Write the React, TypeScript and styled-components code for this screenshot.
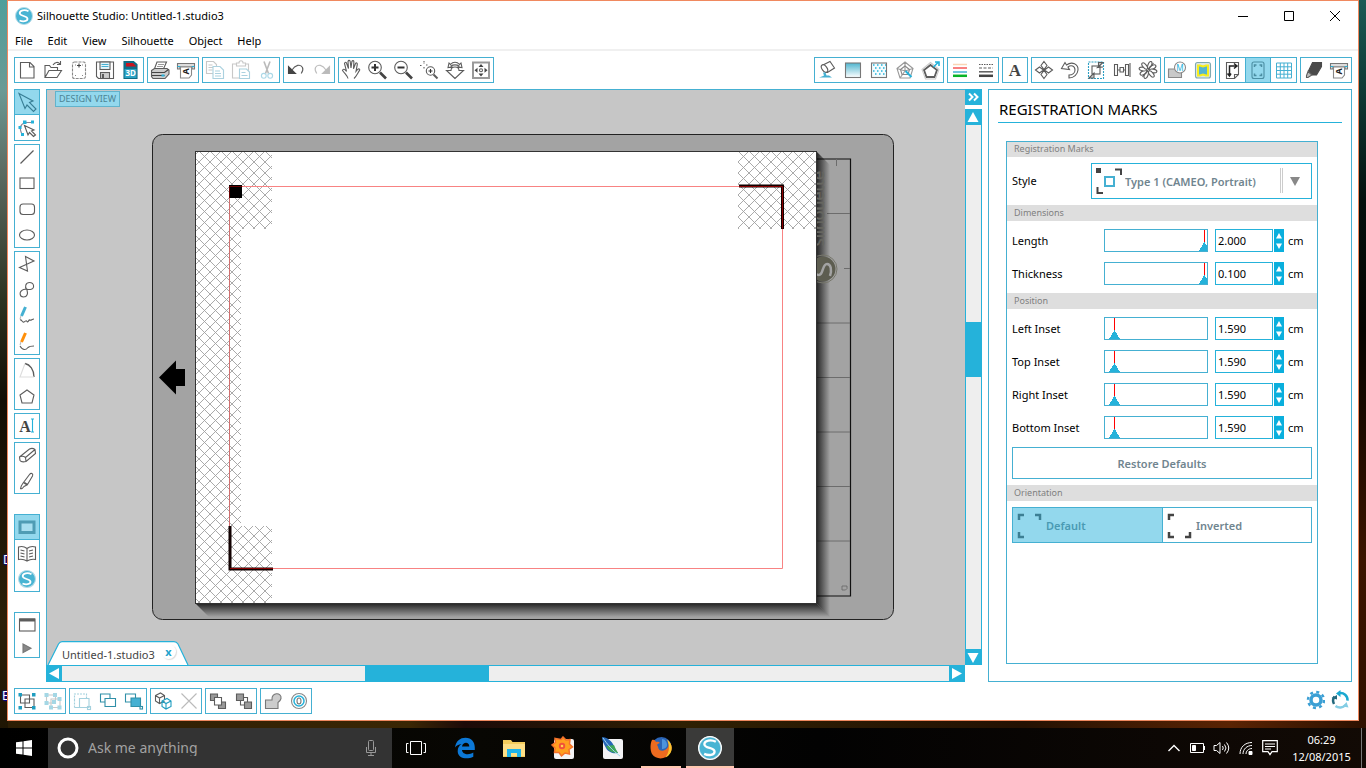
import React from "react";
import styled, { createGlobalStyle, css } from "styled-components";

const blue = "#45b0d2";
const bright = "#25b2da";
const pale = "#93d8ed";
const ink = "#5c5c5c";
const uiFont = '"Noto Sans", "Open Sans", sans-serif';

const GlobalStyle = createGlobalStyle`
  * { box-sizing: border-box; }
  html, body { margin: 0; padding: 0; }
  body { font-family: ${uiFont}; font-size: 11px; line-height: 16px; color: #000; background: #0a0603; }
  button, input, select { font: inherit; color: inherit; margin: 0; }
  button { border: 0; padding: 0; background: none; display: block; }
  svg { display: block; }
`;

/* ---------- desktop and window ---------- */

const Desktop = styled.div`
  min-height: 100vh;
  display: flex;
  flex-direction: column;
  background:
    linear-gradient(#4f9f9b 0, #6b9a95 90px, #5c6c62 170px, #2c3320 300px, #120d04 400px, #2c1f08 620px, #1b1202 100%) left / 8px 100% no-repeat,
    linear-gradient(#1d5a55 0, #0d3a35 90px, #03100d 200px, #050300 330px, #3b1400 560px, #2b1000 100%) right / 8px 100% no-repeat,
    linear-gradient(90deg, #2c1d04, #3a2604 30%, #1d0a08 34%, #2f2003 50%, #241102 75%, #5a2303 90%, #2b1000);
`;

const WindowArea = styled.div`
  position: relative;
  flex: 1;
  display: flex;
  padding: 0 7px 7px;
  overflow: hidden;
`;

const DesktopLabel = styled.span<{ $left: number; $top: number }>`
  position: absolute;
  left: ${(p) => p.$left}px;
  top: ${(p) => p.$top}px;
  color: #fff;
  font-size: 12px;
  text-shadow: 0 0 2px #00f, 1px 1px 1px #008;
`;

const Window = styled.main`
  position: relative;
  flex: 1;
  display: flex;
  flex-direction: column;
  min-width: 0;
  border: 1px solid #f0895f;
  background: #fff;
`;

const TitleBar = styled.header`
  display: flex;
  align-items: center;
  height: 29px;
  padding-left: 7px;
`;

const Title = styled.h1`
  flex: 1;
  margin: 0 0 0 4px;
  font-size: 11px;
  line-height: 16px;
  font-weight: 400;
`;

const CaptionButton = styled.button`
  width: 46px;
  height: 29px;
  display: grid;
  place-items: center;
`;

const MenuBar = styled.nav`
  display: flex;
  gap: 15px;
  height: 21px;
  padding: 2px 7px 0;
  border-bottom: 2px solid #f0f0f0;
`;

const MenuItem = styled.button`
  font-size: 11px;
  line-height: 16px;
`;

const Bar = styled.div`
  display: flex;
  justify-content: space-between;
  padding: 6px;
`;

const BarSide = styled.div`
  display: flex;
  gap: 3px;
`;

const Group = styled.div<{ $vertical?: boolean; $spaced?: boolean }>`
  display: flex;
  flex-direction: ${(p) => (p.$vertical ? "column" : "row")};
  margin-top: ${(p) => (p.$spaced ? 17 : 0)}px;
  outline: 1px solid ${blue};
  outline-offset: -1px;
`;

const Tool = styled.button<{ $active?: boolean; $faded?: boolean; $short?: boolean }>`
  width: 26px;
  height: ${(p) => (p.$short ? 20 : 26)}px;
  overflow: hidden;
  ${(p) => p.$active && css`background: ${pale}; box-shadow: inset 0 0 0 1px ${blue};`}
  svg { opacity: ${(p) => (p.$faded ? 0.4 : 1)}; margin-top: ${(p) => (p.$short ? -3 : 0)}px; }
`;

const Workspace = styled.div`
  flex: 1;
  display: flex;
  gap: 6px;
  padding: 0 6px;
`;

const ToolColumn = styled.div`
  display: flex;
  flex-direction: column;
  gap: 3px;
`;

/* ---------- design view ---------- */

const DesignPane = styled.section`
  flex: 1;
  min-width: 0;
  display: grid;
  grid-template-columns: minmax(0, 1fr) 17px;
  grid-template-rows: 1fr 17px;
`;

const Canvas = styled.div`
  display: flex;
  flex-direction: column;
  align-items: flex-start;
  border: solid ${blue};
  border-width: 1px 0 0 1px;
  background: #c6c6c6;
`;

const ViewBadge = styled.div`
  margin: 1px 0 0 8px;
  padding: 0 3px;
  border: 1px solid #62b3cb;
  background: ${pale};
  color: #4d8494;
  font-size: 9px;
  line-height: 14px;
`;

const ArtArea = styled.div`
  flex: 1;
  align-self: stretch;
  display: flex;
  justify-content: center;
  padding: 27px 0 0 34px;
  overflow: hidden;
`;

const DocTab = styled.div`
  position: relative;
  display: flex;
  align-items: center;
  height: 24px;
  width: 142px;
  padding: 3px 0 0 15px;
  color: #444;
  font-size: 11px;
`;

const TabShape = styled.svg`
  position: absolute;
  left: 0;
  top: 0;
`;

const TabText = styled.span`
  position: relative;
  flex: 1;
  white-space: nowrap;
`;

const TabClose = styled.button`
  position: relative;
  width: 15px;
  height: 15px;
  margin: -7px 13px 0 0;
  border-radius: 50%;
  box-shadow: 1px 1px 1px #ddd;
  color: #1fa3cc;
  font-size: 11px;
  font-weight: 700;
  line-height: 13px;
`;

const VScroll = styled.div`
  display: flex;
  flex-direction: column;
  background: #fff;
`;

const HScroll = styled.div`
  display: flex;
  border: solid ${bright};
  border-width: 1px 0;
  background: #eee;
`;

const ScrollButton = styled.button`
  width: 17px;
  height: 16px;
  flex: none;
  background: ${bright};
`;

const HScrollButton = styled(ScrollButton)`
  width: 16px;
  height: 15px;
`;

const VTrack = styled.div`
  flex: 1;
  display: grid;
  grid-template-rows: 197fr 55fr 272fr;
  border: solid ${bright};
  border-width: 0 1px;
  background: #eee;
`;

const HTrack = styled.div`
  flex: 1;
  display: grid;
  grid-template-columns: 303fr 124fr 461fr;
`;

const VThumb = styled.div`
  grid-row: 2;
  background: ${bright};
`;

const HThumb = styled.div`
  grid-column: 2;
  background: ${bright};
`;

const Spacer = styled.div`
  height: 4px;
`;

/* ---------- registration marks panel ---------- */

const Panel = styled.aside`
  width: 364px;
  display: flex;
  flex-direction: column;
  border: 1px solid ${blue};
`;

const PanelTitle = styled.h2`
  margin: 0 9px;
  height: 33px;
  padding: 8px 0 0 1px;
  border-bottom: 1px solid ${bright};
  font-size: 15px;
  line-height: 22px;
  font-weight: 400;
`;

const Frame = styled.div`
  flex: 1;
  margin: 18px 33px 17px 17px;
  outline: 1px solid ${blue};
  outline-offset: -1px;
`;

const SectionTitle = styled.h3`
  margin: 0;
  padding-left: 8px;
  background: #dedede;
  color: #808080;
  font-size: 9px;
  line-height: 16px;
  font-weight: 400;
`;

const SectionBody = styled.div<{ $tight?: boolean }>`
  display: flex;
  flex-direction: column;
  gap: ${(p) => (p.$tight ? 6 : 10)}px;
  padding: ${(p) => (p.$tight ? 6 : 8)}px 6px;
`;

const Field = styled.div`
  display: flex;
  align-items: center;
`;

const Label = styled.label<{ $narrow?: boolean }>`
  width: ${(p) => (p.$narrow ? 79 : 92)}px;
`;

const SliderFrame = styled.div`
  flex: 1;
  height: 23px;
  border: 1px solid ${blue};
  overflow: hidden;
`;

const Slider = styled.input`
  display: block;
  appearance: none;
  width: calc(100% + 3px);
  height: 21px;
  background: none;
  &::-webkit-slider-thumb {
    appearance: none;
    width: 11px;
    height: 21px;
    border: 0;
    border-radius: 0;
    background:
      linear-gradient(to bottom right, transparent 50%, ${bright} 50%) 0 100% / 6px 10px no-repeat,
      linear-gradient(to bottom left, transparent 50%, ${bright} 50%) 100% 100% / 6px 10px no-repeat,
      linear-gradient(#f00, #f00) 5px 0 / 1px 12px no-repeat;
  }
`;

const NumberBox = styled.input`
  width: 58px;
  height: 23px;
  margin: 0 1px 0 7px;
  padding: 0 0 0 2px;
  border: 1px solid ${bright};
  border-radius: 0;
  background: #fff;
  font-size: 11px;
`;

const Stepper = styled.div`
  display: flex;
  flex-direction: column;
  background: #0aafdd;
`;

const Step = styled.button`
  width: 10px;
  height: 11px;
  &:first-child { height: 12px; }
`;

const Unit = styled.span`
  width: 28px;
  padding-left: 4px;
`;

const SelectFrame = styled.div`
  position: relative;
  flex: 1;
  height: 36px;
  border: 1px solid ${bright};
`;

const Select = styled.select`
  appearance: none;
  width: 100%;
  height: 34px;
  padding: 2px 0 0 33px;
  border: 0;
  background: none;
  color: #70858f;
  font-size: 11px;
  font-weight: 600;
`;

const SelectMark = styled.svg<{ $right?: boolean }>`
  position: absolute;
  top: 0;
  ${(p) => (p.$right ? "right: 0;" : "left: 0;")}
  pointer-events: none;
`;

const RestoreButton = styled.button`
  height: 32px;
  margin-top: -2px;
  margin-bottom: -2px;
  padding-top: 2px;
  border: 1px solid ${blue};
  color: #70858f;
  font-size: 11px;
  font-weight: 600;
`;

const Orientation = styled.div`
  display: grid;
  grid-template-columns: 1fr 1fr;
  outline: 1px solid ${blue};
  outline-offset: -1px;
`;

const OrientationButton = styled.button<{ $active?: boolean }>`
  display: flex;
  align-items: center;
  height: 36px;
  padding-top: 1px;
  background: ${(p) => (p.$active ? pale : "#fff")};
  color: ${(p) => (p.$active ? "#4a9ab3" : "#70858f")};
  font-size: 11px;
  font-weight: 600;
  & + & { box-shadow: inset 1px 0 0 ${blue}; }
`;

/* ---------- taskbar ---------- */

const Taskbar = styled.footer`
  display: flex;
  height: 40px;
  background: linear-gradient(90deg, #000, #080703 35%, #020202 60%, #120a05);
  color: #fff;
`;

const StartButton = styled.button`
  width: 48px;
  display: grid;
  place-items: center;
`;

const SearchBox = styled.label`
  display: flex;
  align-items: center;
  width: 344px;
  padding: 0 13px 0 8px;
  gap: 8px;
  background: #333;
`;

const SearchInput = styled.input`
  flex: 1;
  min-width: 0;
  padding: 0;
  border: 0;
  background: none;
  font-size: 14px;
  &::placeholder { color: #a2a2a2; opacity: 1; }
`;

const Apps = styled.div`
  flex: 1;
  display: flex;
  gap: 1px;
`;

const AppButton = styled.button<{ $state?: "open" | "active" }>`
  position: relative;
  width: 48px;
  display: grid;
  place-items: center;
  background: ${(p) => (p.$state === "active" ? "#3a3a39" : "none")};
  &::after {
    content: "";
    display: ${(p) => (p.$state ? "block" : "none")};
    position: absolute;
    bottom: 0;
    left: ${(p) => (p.$state === "open" ? 4 : 0)}px;
    right: ${(p) => (p.$state === "open" ? 4 : 0)}px;
    height: 2px;
    background: #ffc7b0;
  }
`;

const Tray = styled.div`
  display: flex;
  align-items: center;
`;

const TrayButton = styled.button`
  width: 24px;
  display: grid;
  place-items: center;
`;

const Clock = styled.time`
  width: 79px;
  text-align: center;
  font-size: 11px;
  line-height: 17px;
`;

const ShowDesktop = styled.button`
  align-self: stretch;
  width: 5px;
  border-left: 1px solid #777;
`;

/* ---------- icons on a 26 unit grid ---------- */

const MatSend = (
  <>
    <path d="M4.500 6.500h17v5.500h-2.500v-2h-12v2h-2.500z" fill="#ddd" stroke="#777" />
    <path d="M4.500 9.500h3m11 0h3" stroke={bright} />
    <path d="M7.500 10v11h8.500l2.500-3V10z" fill="#fff" stroke="#888" />
    <text transform="translate(15.5 14.5) rotate(-90)" fontSize="9" fontWeight="700" textAnchor="middle" fill="#222" stroke="none">A</text>
  </>
);
const Brush = (color: string, tail: string) => (
  <>
    <path d="M11.500 4L7.500 13" stroke={color} strokeWidth="3" />
    <path d="M7 13l-1 3" stroke="#bbb" />
    <path d={tail} />
  </>
);
const Loupe = (
  <>
    <circle cx="11" cy="10.500" r="6.300" fill="#fff" />
    <path d="M16 15.500l6 6" strokeWidth="2.600" stroke="#444" />
  </>
);
const Cube = (x: number, y: number, c: string) => (
  <path d={`M${x} ${y}l5-2.500 4 2.500v5.500l-5 2.500-4-2.500z M${x} ${y}l4 2.500 5-2.500 M${x + 4} ${y + 2.5}v5.500`} stroke={c} fill="#fff" />
);
const Logo = (
  <>
    <circle cx="13" cy="13" r="8.500" fill="#48b4d3" stroke="#b7dce8" />
    <path d="M17.500 8.200C14 6.200 8.500 7 8.700 10.300c.2 3.200 7.800 2.200 7.800 5.500 0 2.600-4.500 3.300-8 1.700" stroke="#fff" strokeWidth="1.800" />
  </>
);

const icons: Record<string, React.ReactNode> = {
  new: <path d="M6.500 5.500h9.500l4 4v11.500h-13.500z M15.500 5.500v4.500h4.500" fill="#fff" />,
  open: <path d="M5 20V8.500h4.500l1.500 2h6.500v3 M5 20.500l4-7h12.500l-4.500 7z M13 8c2-3 5-3.500 7-1 M20.500 4v3.500h-3.500" />,
  mat: <><rect x="6.500" y="5" width="13" height="16.500" rx="2" strokeDasharray="3 1" stroke="#888" /><path d="M13 6.500v4 M11 8.500h4" stroke="#444" /><path d="M9 18.500h1m6 0h1 M9 8h1m6 0h1" stroke="#888" /></>,
  save: <><path d="M4.500 5h17v16.500h-15l-2-2z" /><rect x="8" y="5" width="10" height="7.500" fill="#e6f5fa" /><path d="M9.500 7.500h7m-7 2h7" stroke={blue} /><rect x="8.500" y="15.500" width="9" height="6" fill="#ccc" /><path d="M11 17v4" strokeWidth="2" /></>,
  sd: <><path d="M6 4.500h9.500l3.500 3v14h-13z" fill="#0f6f8a" stroke="#0e6a82" /><path d="M6.500 12h12v9h-12z" fill="#2ba3c4" stroke="none" /><path d="M8 6h7l3.500 3.500h-10.500z" fill="#c8141f" stroke="none" /><text x="7.500" y="19" fontSize="8" fontWeight="700" fill="#fff" stroke="none">3D</text></>,
  print: <><path d="M10 5h9.500l-3.500 8h-9z" fill="#fff" /><path d="M4.500 13.500l3-2h12.500l2 1.500v4l-4 4.500h-12l-1.500-2z" fill="#ccc" /><path d="M5 15.500h12.500l4-3 M5 18.500h12.500" stroke="#444" /><path d="M11 7.500h6m-7 2h6" stroke="#999" /><path d="M14.500 18.500h3" stroke={bright} strokeWidth="2" /></>,
  send: MatSend,
  copy: <><path d="M4.500 4.500h7l3 3v9h-10z" fill="#fff" stroke="#777" /><path d="M6.500 8h4m-4 2.500h5m-5 2.500h4" stroke="#777" /><path d="M11 9.500h7l3.500 3.500v8.500h-10.500z" fill="#fff" stroke="#2f8fb0" /><path d="M13 14h5m-5 2.500h6m-6 2.500h6" stroke="#2f8fb0" /></>,
  paste: <><path d="M4.500 7h16v14h-16z" stroke="#777" /><path d="M8.500 9v-3h2.500c0-3 4-3 4 0h2.500v3z" fill="#fff" stroke="#777" /><path d="M11.500 12h7l3 3v6.500h-10z" fill="#fff" stroke="#2f8fb0" /><path d="M13.500 15.500h4m-4 3h6" stroke="#2f8fb0" /></>,
  cut: <><path d="M10 4.500l4.500 12 M16 4.500l-4.500 12" stroke="#555" strokeWidth="1.600" /><circle cx="9.800" cy="18.800" r="2.400" stroke="#2f9fc5" /><circle cx="16.200" cy="18.800" r="2.400" stroke="#2f9fc5" /></>,
  undo: <><path d="M5.500 9.500v7h7z" fill="#444" stroke="#444" /><path d="M9 13c3-5 8.500-6.500 10.500-2.500.9 2 .2 4-1.300 6" /></>,
  redo: <><path d="M20.500 9.500v7h-7z" fill="#555" /><path d="M17 13c-3-5-8.500-6.500-10.500-2.500-.9 2-.2 4 1.300 6" /></>,
  hand: <path d="M10 21.500c-.5-2.500-2-3.500-5.500-8 .5-2 2-1.500 4 .8L6.500 6.500c.5-1.800 1.800-1.500 2.200 0l1.800 5-.5-7c.5-1.600 2-1.300 2.200 0l.8 6.500.9-6.500c.6-1.400 1.900-1.100 2 .3l-.4 6.900 2-5.200c.8-1.200 2-.6 1.800.8l-1.300 7 1.600-1.900c1.300-1 2.500-.3 2 1-1.600 2-3 5.800-5.600 8.100" fill="#fff" />,
  zoomIn: <>{Loupe}<path d="M7.500 10.500h7 M11 7v7" stroke="#333" strokeWidth="2" /></>,
  zoomOut: <>{Loupe}<path d="M7.500 10.500h7" stroke="#333" strokeWidth="2" /></>,
  zoomSel: <><circle cx="14.500" cy="14" r="4.200" /><path d="M12.500 14h4m-2-2v4" stroke="#333" /><path d="M17.500 17.500l4 4" strokeWidth="2" /><path d="M8 4v3m0 3v2.500 M4 8.500h2.500m3.500-.500h2" strokeDasharray="1.500 1" /></>,
  zoomDrag: <path d="M13 21.500l-8.500-8h4.500c0-2 1-3.500 4-3.500s4 1.500 4 3.500h4.500z M6 10.500l1-4.500 1.500 1.500c2.500-3 6.500-3 9 0l1.500-1.500 1 4.500-4.500-.5 1.500-1c-2-1.500-6-1.500-8 0l1.500 1z" fill="#fff" />,
  fit: <><rect x="5" y="5.500" width="16" height="15.500" fill="#fff" stroke="#999" strokeWidth="2" /><path d="M13 7l2.500 3h-5z M13 19.500l2.500-3h-5z M6.500 13.200l3-2.500v5z M19.500 13.200l-3-2.500v5z" fill="#444" stroke="none" /><circle cx="13" cy="13.200" r="1.500" fill="#fff" /></>,
  fillColor: <><path d="M8 8.500l8-4 4.500 6.500-7 4.500c-3 0-6-3.500-5.500-7z" fill="#fff" /><ellipse cx="10.500" cy="11.500" rx="2.500" ry="4.200" transform="rotate(-35 10.500 11.500)" fill="#fff" /><path d="M5 20.500h13l-3-2h-2.500l-1-3h-2.500l1 3c-1 1-3 1-5 2z" fill={blue} stroke="none" /></>,
  gradient: <><defs><linearGradient id="fillFade" x2="0" y2="1"><stop stopColor="#4fb5cf" /><stop offset="1" stopColor="#fff" /></linearGradient></defs><rect x="5.500" y="6" width="15" height="14.500" fill="url(#fillFade)" stroke="#777" /></>,
  dots: <><rect x="5.500" y="6" width="15" height="14.500" fill="#f4fcfe" stroke="#777" /><path d="M7 8h13 M9 11h11 M7 14h13 M9 17h11" stroke={bright} strokeWidth="1.500" strokeDasharray="1.500 2.500" /></>,
  penta: <><path d="M13 5l8 6.500-3 9.500h-10l-3-9.500z M13 5v9 M5 11.500l8 2.500 8-2.500 M8 21l5-7" stroke="#999" /><path d="M8.500 12.500l4.500-3.500 4.500 3.500-1.500 5h-6z" stroke="#888" /><path d="M13.500 14l6 6" stroke={bright} strokeWidth="2" /></>,
  pentaLine: <><path d="M12.500 8l6.500 5-2.500 7h-8l-2.500-7z" strokeWidth="1.800" /><path d="M12.500 5.500l8.500 7-3.500 9.500h-10l-3.500-9.500z" stroke="#ccc" /><path d="M15.500 10l4.500-4.500m-3-.500h4v4" stroke={bright} strokeWidth="1.600" /></>,
  lineColor: <><path d="M6 7.500h14" stroke="#fad4b4" strokeWidth="1.500" /><path d="M6 11h14" stroke="#f88080" strokeWidth="2" /><path d="M6 15h14" stroke="#45b0d2" strokeWidth="1.500" /><path d="M6 18.800h14" stroke="#08b427" strokeWidth="2.500" /></>,
  lineStyle: <><path d="M6 7.500h14" strokeDasharray="1.500 1" /><path d="M6 11h14" strokeDasharray="3 1.500" /><path d="M6 14.800h14" strokeWidth="1.500" /><path d="M6 18.800h14" strokeWidth="2.500" stroke="#444" /></>,
  letter: <text x="13" y="19" fontSize="17" fontWeight="700" textAnchor="middle" fontFamily="Liberation Serif, serif" fill="#444" stroke="none">A</text>,
  move: <><path d="M13 4.500l3 4-3 4-3-4z M13 21.500l3-4-3-4-3 4z M4.500 13l4-3 4 3-4 3z M21.500 13l-4-3-4 3 4 3z" fill="#fff" /></>,
  rotate: <path d="M4.500 11.500l3.500-6 1.500 2.500c5.500-4 12-1 11.500 5-.5 4.500-4 8-9 8v-3c3.500 0 6-2 6-5 0-4-4-5.500-7-3l1.500 2.500z" fill="#fff" />,
  scale: <><rect x="5.500" y="5" width="15" height="16.500" stroke="#2d9fc4" strokeDasharray="2 1" /><rect x="9" y="9" width="8" height="8" fill="#fff" /><path d="M14.500 10.500l5.500-5h-4.500v4.500h4.500z M6 21l5-5v5z" fill="#ccc" /></>,
  align: <path d="M5.500 7.500h3v11h-3z M16.500 7.500h3v11h-3z M11 10.500h3.500v4.500h-3.500z M8.500 13h2.500m3.500 0h2 M21 6v14" />,
  replicate: <g>{[20, 60, 100, 140, 200, 240, 280, 320].map((a) => <ellipse key={a} cx="13" cy="7.800" rx="1.800" ry="3.800" transform={`rotate(${a} 13 13)`} fill="#fff" />)}<path d="M7.500 20l11-14" /></g>,
  weld: <><path d="M4.500 12h13v8.500h-13z" fill="#c9c9c9" stroke="#888" /><circle cx="16" cy="10.500" r="5.500" fill="#fff" stroke="#888" /><text x="16" y="13.500" fontSize="8" textAnchor="middle" fill={bright} stroke="none">M</text></>,
  trace: <><rect x="5.500" y="5.500" width="15" height="15.500" rx="2" fill="#dbe6e6" stroke="#7fa9b0" /><path d="M8 8.500h2l3 1 3-1h2v10h-2l-3-1-3 1h-2z" fill="#55b5d0" stroke="#f7ee1c" strokeWidth="2" /></>,
  page: <><path d="M7.500 5.500h12v12l-4 4h-8z M15.500 21.500v-4h4" /><path d="M10.500 18v-9h6.500 M15 6.500l3 2.500-3 2.500 M8.500 16.500l2 2.500 1.500-2.500" stroke="#222" strokeWidth="1.500" /></>,
  regmarks: <g stroke="#4b8ea3"><rect x="7" y="5" width="12" height="16.500" rx="2" /><path d="M9.500 10V8h2 M14.500 8h2v2 M9.500 16.500v2h2 M16.500 16.500v2h-2" strokeWidth="1.500" /></g>,
  grid: <path d="M5.500 6h15v15h-15z M5.500 9.800h15 M5.500 13.500h15 M5.500 17.200h15 M9.300 6v15 M13 6v15 M16.700 6v15" stroke={blue} strokeWidth="1" />,
  blade: <><path d="M12.500 5.500h9v4l-5 8.500h-4l-4-4z" fill="#4a4a4a" stroke="#4a4a4a" /><path d="M8 14.500l4 3.500-4 2.500h-1.500v-2z" fill="#bbb" /></>,
  select: <path d="M5 4.500l14 7.500-3.500 1.500 6.500 6.500-2.500 2.500-6.500-6.500-2 3.500z" stroke="#377d94" />,
  editPoints: <><path d="M10.500 10.500l9.500 4.500-2.500 1 4 4-2 1.500-4-4-1.500 2.500z" fill="#fff" /><path d="M8 19.500c-3-6-2-10 3-12h7" stroke="#889" /><path d="M9 5.500h3.500v3.500h-3.500z M17 5.500h3v3h-3z M4.500 11h3v3h-3z M7 18h3v3h-3z" fill={bright} stroke="none" /></>,
  line: <path d="M6.500 19.500l13-13" strokeWidth="1.300" />,
  rect: <rect x="6" y="8" width="14" height="10.500" />,
  roundRect: <rect x="6" y="8" width="14.500" height="10.500" rx="3" />,
  ellipse: <ellipse cx="13" cy="13" rx="7.500" ry="5" />,
  polyline: <path d="M11.500 5.500l8.500 4.500-14.500 6.500 8 3.500z" />,
  curve: <path d="M13 13c-3-3.500-1-7.500 2.500-7.500 5 0 5.500 6.500 1 7-3 .3-4.500-.800-7 0-5 2-4 7.500 0 7.500s4.500-3.500 3.500-7z" />,
  freehand: Brush(blue, "M6 17c2-1 2 3 4 2s2-2 3-.5 2-2.500 3-1.500 2-1 4-1"),
  smooth: Brush("#ff8f0a", "M6 17c3 5 6 4 8 1.500 1-1 3-1.500 6-1.500"),
  arc: <><path d="M11 5.500c5 1 9 6 9 13.500" strokeWidth="1.300" /><path d="M11 5.500L6 19h14" stroke="#ddd" /></>,
  polygon: <path d="M13 6l7 5-2 8h-10l-2-8z" />,
  text: <><text x="11" y="19" fontSize="16" fontWeight="700" textAnchor="middle" fontFamily="Liberation Serif, serif" fill="#444" stroke="none">A</text><path d="M17 6h3m-1.500 0v13m-1.500 0h3" stroke={bright} /></>,
  eraser: <path d="M5.500 15l10-8c2-1 3.500-1 5.500.5l.5 4-9.500 8c-2 .5-5 .5-6-1z M5.500 15c2-1 4-1 6 .5l.5 4 M11.500 15.500l9.500-8" />,
  knife: <path d="M6.500 21c0-3 1.500-4.500 3-6.500l6-8c1.500-2 4-1 3 1.500l-5 8.500-3-2 M9.500 14.500l3.500 2.500-3 1.500c-1 1.500-2 2.500-3.500 2.500" />,
  viewDesign: <rect x="6" y="8" width="14" height="10.500" fill="#a9dff0" stroke="#4f9cb4" strokeWidth="3" />,
  library: <path d="M4.500 7c3-1 6-.5 8.500 1.500 2.500-2 5.500-2.500 8.500-1.500v12.500c-3-.5-6 0-8.500 1.500-2.500-1.500-5.500-2-8.500-1.500z M13 8.500v12 M6.500 10l4 1m-4 2l4 1m-4 2l4 1 M15 11l4-1m-4 4l4-1m-4 4l4-1" />,
  store: Logo,
  panelWin: <><rect x="5.500" y="7" width="15.500" height="12" /><path d="M5.500 8h15.500" strokeWidth="3" /></>,
  play: <path d="M9 9l8 4.300-8 4.300z" fill="#888" stroke="#777" />,
  group: <><path d="M6.500 7h9v8h-9z M11 11h9v8.500h-9z" /><path d="M4.500 5h3.500v3.500h-3.500z M18 5h3.500v3.500h-3.500z M4.500 18h3.500v3.500h-3.500z M18 18h3.500v3.500h-3.500z" fill="#1f9dc0" stroke="none" /></>,
  ungroup: <><path d="M6.500 7h9v8h-9z M11 11h9v8.500h-9z" stroke="#777" /><path d="M4.500 5h4v4h-4z M13 5h4v4h-4z M4.500 13h4v4h-4z M9 17.500h4v4h-4z M17.500 17.500h4v4h-4z M17.500 9h4v4h-4z M12 12h4v4h-4z" fill="#1f9dc0" stroke="none" /></>,
  compound: <g stroke="#1f8dad"><path d="M5.500 12.500V6h12v4 M5.500 19.500v-7" strokeDasharray="2 1" /><path d="M5.500 19.500h5 M10.500 10.500h9.500v9h-9.500z" /><rect x="18.500" y="18.500" width="3" height="3" /></g>,
  release: <g stroke="#2f8fa8"><path d="M5.500 6h9.500v8h-9.500z" /><path d="M10 10.500h10.500v8h-10.500z" fill="#fff" /></g>,
  crop: <g stroke="#2f8fa8"><path d="M4.500 6h10v8h-10z" /><path d="M10 10h9.500v8.500h-9.500z" fill={blue} /><rect x="19" y="18.500" width="2.500" height="2.500" fill="#fff" /></g>,
  cubes: <>{Cube(5.5, 7.5, ink)}{Cube(12, 13, "#1f9dc0")}</>,
  remove: <path d="M5.500 5.500l15 15 M20.500 5.500l-15 15" stroke="#555" />,
  front: <><path d="M5.500 6h7v6.500h-7z M13.500 14h7v6.500h-7z" fill="#999" /><path d="M9.500 9.500h7v7.500h-7z" fill="#fff" /></>,
  back: <><path d="M9.500 9.500h7v7.500h-7z" fill="#fff" /><path d="M5.500 6h7v6.500h-7z M13.500 14h7v6.500h-7z" fill="#999" /></>,
  weldShape: <path d="M5.500 12h6.500c-1-8 10-8 9-1.500-.5 2-1.500 3-3 4v6h-12.500z" fill="#ccc" stroke="#777" />,
  offset: <><circle cx="13" cy="13" r="7.500" stroke="#888" /><circle cx="13" cy="13" r="5" stroke={bright} strokeWidth="1.500" /><ellipse cx="13" cy="13" rx="2" ry="3" stroke="#777" /></>,
};

const Icon = ({ name, size = 26 }: { name: string; size?: number }) => (
  <svg width={size} height={size} viewBox="0 0 26 26" fill="none" stroke={ink} strokeWidth="1.1" aria-hidden="true">
    {icons[name]}
  </svg>
);

const faded = new Set(["copy", "paste", "cut", "redo", "ungroup", "compound", "remove"]);
const active = new Set(["select", "regmarks", "viewDesign"]);

const ToolGroup = ({ names, vertical, spaced }: { names: string; vertical?: boolean; spaced?: boolean }) => (
  <Group $vertical={vertical} $spaced={spaced}>
    {names.split(" ").map((n) => (
      <Tool key={n} aria-label={n} $active={active.has(n)} $faded={faded.has(n)} $short={n === "play"}>
        <Icon name={n} />
      </Tool>
    ))}
  </Group>
);

/* ---------- artboard drawing ---------- */

const Artboard = () => (
  <svg width="742" height="486" viewBox="152 134 742 486" fill="none" aria-label="Cutting mat with registration marks">
    <defs>
      <pattern id="hatch" width="11" height="11" x="199" y="151" patternUnits="userSpaceOnUse">
        <path d="M0 0l11 11 M11 0L0 11" stroke="#a0a0a0" strokeWidth="0.9" />
      </pattern>
      <linearGradient id="shadeRight"><stop stopColor="#000" stopOpacity=".75" /><stop offset="1" stopColor="#000" stopOpacity="0" /></linearGradient>
      <linearGradient id="shadeDown" x2="0" y2="1"><stop stopColor="#000" stopOpacity=".75" /><stop offset="1" stopColor="#000" stopOpacity="0" /></linearGradient>
    </defs>
    <rect x="152.500" y="134.500" width="741" height="485" rx="10" fill="#a3a3a3" stroke="#222" />
    <path d="M800 159h50.500v437h-50.500" stroke="#111" strokeWidth="1.200" />
    <path d="M827 213.500h23 M817 323h33 M817 377.500h33 M817 432h33 M817 486.500h33 M817 541h33 M844 268.500h6 M836.500 159v7" stroke="#6c6c6c" />
    <path d="M842 586h5v2.500l-1.500 1.500h-3.500z" stroke="#666" strokeWidth=".8" />
    <path d="M817 152l13 13v452l-13-13z" fill="url(#shadeRight)" />
    <path d="M196 604h621l13 13h-621z" fill="url(#shadeDown)" />
    <text transform="translate(824 246) rotate(-90)" fontSize="16" fill="#666660" stroke="#666660" strokeWidth=".4">silhouette</text>
    <g transform="rotate(-90 823 269)">
      <circle cx="823" cy="269" r="14" stroke="#77776c" />
      <circle cx="823" cy="269" r="12.500" fill="#5d5d50" />
      <path d="M830 262c-5-3-13-2-13 3 0 4.500 11 3 11 8 0 4-6 5-12 3" stroke="#a3a3a3" strokeWidth="2.500" />
    </g>
    <rect x="195.500" y="151.500" width="621" height="452" fill="#fff" stroke="#333" />
    <path d="M196 152h76v77h-31v297h31v77h-76z M738 152h78v77h-78z" fill="url(#hatch)" />
    <path d="M240 186.500h542.500v382h-510" stroke="#f88383" />
    <path d="M229.500 198v330" stroke="#d07070" />
    <rect x="229" y="185" width="13" height="13" fill="#000" />
    <path d="M229.500 198v-11.500h13" stroke="#a00" strokeWidth=".6" />
    <path d="M739 186h43.500v43" stroke="#100" strokeWidth="3" />
    <path d="M739 186.500h43.500v42" stroke="#8b0000" />
    <path d="M230 526v43h43" stroke="#100" strokeWidth="3" />
    <path d="M230 568.500h43" stroke="#8b0000" />
    <path d="M159 377.500l17-17v8.500h9v17h-9v8.500z" fill="#000" />
  </svg>
);

const Arrow = ({ d, w = 16, h = 16 }: { d: string; w?: number; h?: number }) => (
  <svg width={w} height={h} viewBox={`0 0 ${w} ${h}`} fill="#fff" aria-hidden="true"><path d={d} /></svg>
);

const Measure = ({ label, value, position }: { label: string; value: string; position: number }) => {
  const id = label.toLowerCase().replace(" ", "-");
  return (
    <Field>
      <Label htmlFor={id}>{label}</Label>
      <SliderFrame><Slider type="range" min="0" max="100" defaultValue={position} aria-label={`${label} slider`} /></SliderFrame>
      <NumberBox id={id} defaultValue={value} />
      <Stepper>
        <Step aria-label={`Increase ${label}`}><Arrow w={10} h={11} d="M5 3l3 5.500h-6z" /></Step>
        <Step aria-label={`Decrease ${label}`}><Arrow w={10} h={11} d="M5 8l3-5.500h-6z" /></Step>
      </Stepper>
      <Unit>cm</Unit>
    </Field>
  );
};

export default function App() {
  return (
    <Desktop>
      <GlobalStyle />
      <WindowArea>
        <DesktopLabel $left={3} $top={552}>D</DesktopLabel>
        <DesktopLabel $left={2} $top={688}>E</DesktopLabel>
        <Window>
          <TitleBar>
            <svg width="18" height="18" viewBox="4 4 18 18" fill="none" aria-hidden="true">{Logo}</svg>
            <Title>Silhouette Studio: Untitled-1.studio3</Title>
            <CaptionButton aria-label="Minimize"><svg width="10" height="10" stroke="#000"><path d="M0 5.500h10" /></svg></CaptionButton>
            <CaptionButton aria-label="Maximize"><svg width="10" height="10" stroke="#000" fill="none"><path d="M.5.5h9v9h-9z" /></svg></CaptionButton>
            <CaptionButton aria-label="Close"><svg width="10" height="10" stroke="#000"><path d="M0 0l10 10M10 0L0 10" /></svg></CaptionButton>
          </TitleBar>
          <MenuBar>
            {["File", "Edit", "View", "Silhouette", "Object", "Help"].map((m) => <MenuItem key={m}>{m}</MenuItem>)}
          </MenuBar>
          <Bar>
            <BarSide>
              <ToolGroup names="new open mat save sd" />
              <ToolGroup names="print send" />
              <ToolGroup names="copy paste cut" />
              <ToolGroup names="undo redo" />
              <ToolGroup names="hand zoomIn zoomOut zoomSel zoomDrag fit" />
            </BarSide>
            <BarSide>
              <ToolGroup names="fillColor gradient dots penta pentaLine" />
              <ToolGroup names="lineColor lineStyle" />
              <ToolGroup names="letter" />
              <ToolGroup names="move rotate scale align replicate" />
              <ToolGroup names="weld trace" />
              <ToolGroup names="page regmarks grid" />
              <ToolGroup names="blade send" />
            </BarSide>
          </Bar>
          <Workspace>
            <ToolColumn>
              <ToolGroup vertical names="select editPoints" />
              <ToolGroup vertical names="line rect roundRect ellipse" />
              <ToolGroup vertical names="polyline curve freehand smooth" />
              <ToolGroup vertical names="arc polygon" />
              <ToolGroup vertical names="text" />
              <ToolGroup vertical names="eraser knife" />
              <ToolGroup vertical spaced names="viewDesign library store" />
              <ToolGroup vertical spaced names="panelWin play" />
            </ToolColumn>
            <DesignPane>
              <Canvas>
                <ViewBadge>DESIGN VIEW</ViewBadge>
                <ArtArea><Artboard /></ArtArea>
                <DocTab>
                  <TabShape width="142" height="24" fill="#fff" stroke={bright} strokeWidth="1.200"><path d="M1 24L11.500 3Q13 .700 15 .700H127Q129.500 .700 131 3L141 24" /></TabShape>
                  <TabText>Untitled-1.studio3</TabText>
                  <TabClose aria-label="Close document">x</TabClose>
                </DocTab>
              </Canvas>
              <VScroll>
                <ScrollButton aria-label="Expand"><svg width="16" height="16" fill="none" stroke="#fff" strokeWidth="2"><path d="M4 4.500l3.500 3.500L4 11.500M9 4.500l3.500 3.500L9 11.500" /></svg></ScrollButton>
                <Spacer />
                <ScrollButton aria-label="Scroll up"><Arrow d="M8 3l5.500 10h-11z" /></ScrollButton>
                <VTrack><VThumb /></VTrack>
                <ScrollButton aria-label="Scroll down"><Arrow d="M8 14l5.500-10h-11z" /></ScrollButton>
              </VScroll>
              <HScroll>
                <HScrollButton aria-label="Scroll left"><Arrow h={15} d="M3 7.500l10-5.500v11z" /></HScrollButton>
                <HTrack><HThumb /></HTrack>
                <HScrollButton aria-label="Scroll right"><Arrow h={15} d="M13 7.500l-10-5.500v11z" /></HScrollButton>
              </HScroll>
            </DesignPane>
            <Panel>
              <PanelTitle>REGISTRATION MARKS</PanelTitle>
              <Frame>
                <SectionTitle>Registration Marks</SectionTitle>
                <SectionBody $tight>
                  <Field>
                    <Label htmlFor="style" $narrow>Style</Label>
                    <SelectFrame>
                      <SelectMark width="32" height="34" fill="none">
                        <path d="M4 4h5v5h-5z" fill="#444" />
                        <path d="M23 5.500h6v5.500 M5.500 23v6h5.500" stroke="#444" strokeWidth="2" />
                        <rect x="13" y="13" width="9" height="9" stroke={blue} strokeWidth="2" />
                      </SelectMark>
                      <Select id="style"><option>Type 1 (CAMEO, Portrait)</option></Select>
                      <SelectMark $right width="34" height="34">
                        <path d="M3.500 4v25 M5.500 4v25" stroke="#ccc" />
                        <path d="M13 13h10l-5 9z" fill="#888" />
                      </SelectMark>
                    </SelectFrame>
                  </Field>
                </SectionBody>
                <SectionTitle>Dimensions</SectionTitle>
                <SectionBody>
                  <Measure label="Length" value="2.000" position={100} />
                  <Measure label="Thickness" value="0.100" position={100} />
                </SectionBody>
                <SectionTitle>Position</SectionTitle>
                <SectionBody>
                  <Measure label="Left Inset" value="1.590" position={4} />
                  <Measure label="Top Inset" value="1.590" position={4} />
                  <Measure label="Right Inset" value="1.590" position={4} />
                  <Measure label="Bottom Inset" value="1.590" position={4} />
                  <RestoreButton>Restore Defaults</RestoreButton>
                </SectionBody>
                <SectionTitle>Orientation</SectionTitle>
                <SectionBody $tight>
                  <Orientation>
                    <OrientationButton $active aria-pressed="true">
                      <svg width="34" height="36" fill="none" stroke="#3c7f94" strokeWidth="2.500"><path d="M7 12V7h5 M23 7h5v5 M7 24v5h5" /></svg>
                      Default
                    </OrientationButton>
                    <OrientationButton aria-pressed="false">
                      <svg width="34" height="36" fill="none" stroke="#444" strokeWidth="2.500"><path d="M7 12V7h5 M7 24v5h5 M23 29h5v-5" /></svg>
                      Inverted
                    </OrientationButton>
                  </Orientation>
                </SectionBody>
              </Frame>
            </Panel>
          </Workspace>
          <Bar>
            <BarSide>
              <ToolGroup names="group ungroup" />
              <ToolGroup names="compound release crop" />
              <ToolGroup names="cubes remove" />
              <ToolGroup names="front back" />
              <ToolGroup names="weldShape offset" />
            </BarSide>
            <BarSide>
              <button aria-label="Preferences">
                <svg width="20" height="24" viewBox="0 1 20 24" fill="none" stroke="#3b9fd4">
                  <circle cx="11" cy="12" r="5" strokeWidth="3.500" />
                  <circle cx="11" cy="12" r="8" strokeWidth="2.500" strokeDasharray="3 3.283" />
                </svg>
              </button>
              <button aria-label="Synchronize">
                <svg width="24" height="24" viewBox="0 1 24 24" fill="none" strokeWidth="2.500">
                  <path d="M11 5.200a7 7 0 0 1 8.500 7.500" stroke="#1aa8d0" />
                  <path d="M17.500 17a7.500 7.500 0 0 1-10 1" stroke="#84cde4" />
                  <path d="M6 16a7 7 0 0 1 .500-7.500" stroke="#24697d" />
                  <path d="M12.500 2v7l-4.500-3.500z" fill="#1aa8d0" /><path d="M20.500 19.500l-6-1 4-4.500z" fill="#84cde4" /><path d="M3.500 10l5.500-3v4.500z" fill="#24697d" />
                </svg>
              </button>
            </BarSide>
          </Bar>
        </Window>
      </WindowArea>
      <Taskbar>
        <StartButton aria-label="Start"><svg width="16" height="16" fill="#fff"><path d="M0 2.300l6.500-.9v6.100H0z M7.500 1.200L16 0v7.500H7.500z M0 8.500h6.500v6.100L0 13.700z M7.500 8.500H16V16l-8.500-1.200z" /></svg></StartButton>
        <SearchBox>
          <svg width="24" height="24" fill="none" stroke="#fff" strokeWidth="3"><circle cx="12" cy="12" r="9" /></svg>
          <SearchInput placeholder="Ask me anything" aria-label="Search" />
          <svg width="16" height="18" fill="none" stroke="#999"><rect x="5.500" y="1.500" width="5" height="10" rx="1" /><path d="M3.500 8v5.500h9V8 M8 13.500v3 M5 16.500h6" /></svg>
        </SearchBox>
        <Apps>
          <AppButton aria-label="Task view"><svg width="22" height="16" fill="none" stroke="#fff"><path d="M5.500 1.500h11v13h-11z M3.500 3.500h-2v9h2 M18.500 3.500h2v9h-2" /></svg></AppButton>
          <AppButton aria-label="Edge">
            <svg width="22" height="22" viewBox="0 0 22 22" fill="#0c78d6"><path d="M1 10.500C2 4 6 .700 11.500 .700c6.500 0 9.500 5 9.300 10.300v2H8c.3 4.500 7 5.500 11.300 2.500v4.200C13 23 4 21.500 3.700 14.500 3.600 11 5 8.700 7.500 7 4.500 7.500 2.300 8.500 1 10.500z M8 9.500h7.300C15.300 4.500 8.800 4.700 8 9.500z" fillRule="evenodd" /></svg>
          </AppButton>
          <AppButton aria-label="File Explorer">
            <svg width="22" height="20"><path d="M0 2h8l1.500 2H22v15H0z" fill="#f3cc5c" /><path d="M0 6h22v12H0z" fill="#fddf86" /><path d="M4 19v-8h14v8h-4v-4H8v4z" fill="#1fb4ea" /></svg>
          </AppButton>
          <AppButton aria-label="Photo viewer">
            <svg width="24" height="24"><rect x="3" y="3" width="20" height="20" rx="2" fill="#f3f3f5" /><path d="M10 3.500l2-2.500 3 3 4-.5-.5 4.500 3 3-3.500 2.500.5 4.500-4.500-1-3.500 3-2.500-3.500-4.500 0 .500-4.500-3-3 3.500-2.500-.500-4z" fill="#ff9f1f" stroke="#f4702a" strokeWidth="1.500" /><circle cx="11" cy="10" r="3.200" fill="#f0503a" /><circle cx="11" cy="10" r="1.300" fill="#ffd54d" /></svg>
          </AppButton>
          <AppButton aria-label="Feather">
            <svg width="24" height="24"><rect x="3" y="3" width="20" height="20" rx="2" fill="#f3f3f5" /><path d="M2 1c5 0 10 4 12 9 1 3 2 5 4 7-5 1-10-1-12-5S2 5 2 1z" fill="#2767b8" /><path d="M6 10c3 6 7 7 12 7-1-2-3-5-4-8z" fill="#3fa45b" /><path d="M3 2c4 6 9 12 17 18" stroke="#9fd6f0" fill="none" /></svg>
          </AppButton>
          <AppButton $state="open" aria-label="Firefox">
            <svg width="24" height="24"><circle cx="12.500" cy="11" r="10" fill="#2b64b5" /><path d="M13 3c3 0 5 3 5 6s-3 4-5 4z" fill="#4d94dc" /><path d="M3 4c2-.5 3 0 4 2 2-.5 3 0 4 1-3 1-3.500 2-2 3.500 0 4 4 5 7 3.500 4-2 4.500-6 3-9.500C22 7 24.500 12 21 17c-4 7-14 7-18 1C1 14 1 8 3 4z" fill="#ee6b1f" /><path d="M18 3.500c6 4 6 12 1.500 16-1 1-2 1.500-3 2 4-6 4.500-11 1.500-18z" fill="#fbc32d" /></svg>
          </AppButton>
          <AppButton $state="active" aria-label="Silhouette Studio">
            <svg width="26" height="26" viewBox="3 3 20 20" fill="none">{Logo}<circle cx="13" cy="13" r="8.800" stroke="#fff" strokeWidth=".8" /></svg>
          </AppButton>
        </Apps>
        <Tray>
          <TrayButton aria-label="Hidden icons"><svg width="14" height="10" fill="none" stroke="#fff" strokeWidth="1.400"><path d="M1.500 8L7 2.500 12.500 8" /></svg></TrayButton>
          <TrayButton aria-label="Battery"><svg width="16" height="10" fill="none" stroke="#fff"><path d="M.5.5h13v9H.5z M14.500 3v4" /><path d="M2.500 2.500h3v5h-3z" fill="#fff" /></svg></TrayButton>
          <TrayButton aria-label="Volume"><svg width="18" height="14" fill="none" stroke="#fff"><path d="M1 4.500h2.500L7 1.500v11L3.500 9.500H1z M9.500 5q1.500 2 0 4 M11.500 3.500q3 3.500 0 7 M13.500 1.500q4.500 5.500 0 11" /></svg></TrayButton>
          <TrayButton aria-label="Network"><svg width="14" height="14" fill="none" stroke="#fff"><path d="M1 13C1 6 6 1.500 13 1.500 M4 13c0-5 4-8.500 9-8.500 M7 13c0-3 2.500-5.500 6-5.500" /><path d="M10 10.500h3v3h-3z" fill="#fff" /></svg></TrayButton>
          <TrayButton aria-label="Notifications"><svg width="16" height="16" fill="none" stroke="#fff" strokeWidth="1.200"><path d="M.7 .7h14.600v11H10l-2 3-2-3H.7z M3 4h10 M3 6.500h10 M3 9h6" /></svg></TrayButton>
          <Clock>06:29<br />12/08/2015</Clock>
          <ShowDesktop aria-label="Show desktop" />
        </Tray>
      </Taskbar>
    </Desktop>
  );
}
